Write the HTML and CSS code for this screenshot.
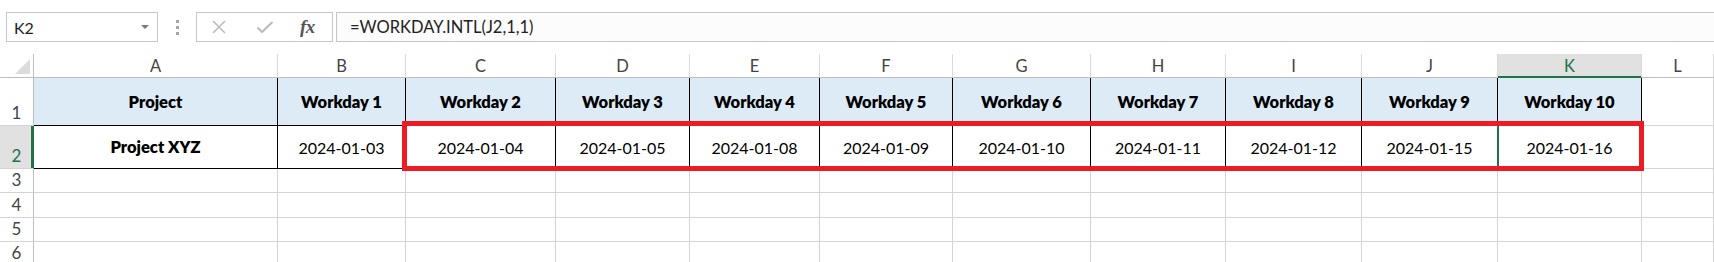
FILE: index.html
```html
<!DOCTYPE html>
<html lang="en">

<head>
    <meta charset="UTF-8" />
    <meta name="viewport" content="width=device-width, initial-scale=1.0" />
    <title>WORKDAY.INTL</title>
    <link rel="stylesheet" href="styles.css">
</head>

<body>
    <div class="toolbar">
        <div class="namebox">
            <span>K2</span>
            <span class="caret"></span>
        </div>
        <div class="grip"><i></i><i></i><i></i></div>
        <div class="fnbox">
            <svg class="icon" width="16" height="16" viewBox="0 0 16 16">
                <path d="M2 2 L14 14 M14 2 L2 14" stroke="#bcbcbc" stroke-width="1.6" fill="none" />
            </svg>
            <svg class="icon" width="18" height="16" viewBox="0 0 18 16">
                <path d="M1.5 8.5 L6 13 L16.5 3" stroke="#bcbcbc" stroke-width="2" fill="none" />
            </svg>
            <span class="fx">fx</span>
        </div>
        <div class="formula">=WORKDAY.INTL(J2,1,1)</div>
    </div>

    <div class="sheet">
        <!-- column headers -->
        <div class="ch corner"><span class="tri"></span></div>
        <div class="ch">A</div>
        <div class="ch">B</div>
        <div class="ch">C</div>
        <div class="ch">D</div>
        <div class="ch">E</div>
        <div class="ch">F</div>
        <div class="ch">G</div>
        <div class="ch">H</div>
        <div class="ch">I</div>
        <div class="ch">J</div>
        <div class="ch active">K</div>
        <div class="ch">L</div>

        <!-- row 1 -->
        <div class="rh">1</div>
        <div class="c t hd">Project</div>
        <div class="c t hd">Workday 1</div>
        <div class="c t hd">Workday 2</div>
        <div class="c t hd">Workday 3</div>
        <div class="c t hd">Workday 4</div>
        <div class="c t hd">Workday 5</div>
        <div class="c t hd">Workday 6</div>
        <div class="c t hd">Workday 7</div>
        <div class="c t hd">Workday 8</div>
        <div class="c t hd">Workday 9</div>
        <div class="c t hd">Workday 10</div>
        <div class="c"></div>

        <!-- row 2 -->
        <div class="rh active">2</div>
        <div class="c t bold">Project XYZ</div>
        <div class="c t">2024-01-03</div>
        <div class="c t">2024-01-04</div>
        <div class="c t">2024-01-05</div>
        <div class="c t">2024-01-08</div>
        <div class="c t">2024-01-09</div>
        <div class="c t">2024-01-10</div>
        <div class="c t">2024-01-11</div>
        <div class="c t">2024-01-12</div>
        <div class="c t before-sel">2024-01-15</div>
        <div class="c t selected">2024-01-16</div>
        <div class="c"></div>

        <!-- rows 3-6 -->
        <div class="rh">3</div>
        <div class="c"></div><div class="c"></div><div class="c"></div><div class="c"></div>
        <div class="c"></div><div class="c"></div><div class="c"></div><div class="c"></div>
        <div class="c"></div><div class="c"></div><div class="c"></div><div class="c"></div>

        <div class="rh">4</div>
        <div class="c"></div><div class="c"></div><div class="c"></div><div class="c"></div>
        <div class="c"></div><div class="c"></div><div class="c"></div><div class="c"></div>
        <div class="c"></div><div class="c"></div><div class="c"></div><div class="c"></div>

        <div class="rh">5</div>
        <div class="c"></div><div class="c"></div><div class="c"></div><div class="c"></div>
        <div class="c"></div><div class="c"></div><div class="c"></div><div class="c"></div>
        <div class="c"></div><div class="c"></div><div class="c"></div><div class="c"></div>

        <div class="rh">6</div>
        <div class="c"></div><div class="c"></div><div class="c"></div><div class="c"></div>
        <div class="c"></div><div class="c"></div><div class="c"></div><div class="c"></div>
        <div class="c"></div><div class="c"></div><div class="c"></div><div class="c"></div>

        <!-- red callout around C2:K2 -->
        <div class="callout"></div>
    </div>
</body>

</html>
```

FILE: styles.css
```css
* {
    box-sizing: border-box;
}

body {
    margin: 0;
    background: #fff;
    font-family: Lato, "Liberation Sans", sans-serif;
    color: #000;
    overflow: hidden;
}

/* formula bar */

.toolbar {
    display: flex;
    align-items: stretch;
    height: 54px;
    padding: 12px 0 12px 6px;
}

.namebox {
    width: 152px;
    border: 1px solid #c6c6c6;
    background: #fff;
    display: flex;
    align-items: center;
    justify-content: space-between;
    padding: 0 8px 0 7px;
    font-size: 16px;
    color: #222;
}

.caret {
    width: 0;
    height: 0;
    border-left: 4px solid transparent;
    border-right: 4px solid transparent;
    border-top: 4px solid #7a7a7a;
}

.grip {
    display: flex;
    flex-direction: column;
    justify-content: center;
    gap: 3px;
    margin: 0 17px 0 18px;
}

.grip i {
    display: block;
    width: 3px;
    height: 3px;
    background: #a6a6a6;
}

.fnbox {
    width: 137px;
    border: 1px solid #c6c6c6;
    display: flex;
    align-items: center;
    padding-left: 14px;
}

.fnbox .icon:first-child {
    margin-right: 29px;
}

.fnbox .icon:nth-child(2) {
    margin-right: 26px;
}

.fx {
    font-family: "Liberation Serif", serif;
    font-style: italic;
    font-weight: bold;
    font-size: 19px;
    color: #555;
    letter-spacing: -0.5px;
}

.formula {
    flex: 1;
    margin-left: 3px;
    margin-right: -4px;
    border: 1px solid #c6c6c6;
    background: #fcfcfc;
    display: flex;
    align-items: center;
    padding-left: 13px;
    font-size: 16.5px;
    color: #222;
}

/* sheet grid */

.sheet {
    position: relative;
    display: grid;
    grid-template-columns: 34px 244px 128px 150px 134px 130px 133px 138px 135px 136px 136px 144px 1fr;
    grid-template-rows: 24px 48px 43px 24px 25px 24px 24px;
    font-size: 16px;
}

.ch {
    display: flex;
    align-items: center;
    justify-content: center;
    border-right: 1px solid #dadada;
    border-bottom: 1px solid #bdbdbd;
    color: #444;
    font-size: 16.5px;
}

.ch.active {
    background: #e1e1e1;
    color: #217346;
    border-bottom-color: #217346;
    box-shadow: inset 0 -1px 0 #217346;
}

.corner {
    position: relative;
    border-right-color: #bdbdbd;
}

.tri {
    position: absolute;
    right: 3px;
    bottom: 3px;
    width: 0;
    height: 0;
    border-left: 15px solid transparent;
    border-bottom: 15px solid #dcdcdc;
}

.rh {
    display: flex;
    align-items: flex-end;
    justify-content: center;
    padding-bottom: 2px;
    border-right: 1px solid #bdbdbd;
    border-bottom: 1px solid #d4d4d4;
    color: #444;
    font-size: 17px;
}

.rh.active {
    background: #e1e1e1;
    color: #217346;
    border-right-color: #217346;
    box-shadow: inset -2px 0 0 #217346;
}

.c {
    display: flex;
    align-items: center;
    justify-content: center;
    border-right: 1px solid #d4d4d4;
    border-bottom: 1px solid #d4d4d4;
    white-space: nowrap;
}

.c.t {
    border-color: #000;
}

.hd {
    background: #ddebf7;
    font-weight: 800;
    font-size: 16.5px;
}

.bold {
    font-weight: 800;
    font-size: 16.5px;
}

.before-sel {
    border-right-color: #217346 !important;
}

.selected {
    box-shadow: inset 1px 0 0 #217346;
}

/* overlay sitting over C2:K2, the grid area is its containing block */
.callout {
    position: absolute;
    grid-column: 4 / 13;
    grid-row: 3 / 4;
    top: -5px;
    right: -2px;
    bottom: -2px;
    left: -4px;
    border: 5px solid #ed1c24;
    pointer-events: none;
    z-index: 2;
}
```
